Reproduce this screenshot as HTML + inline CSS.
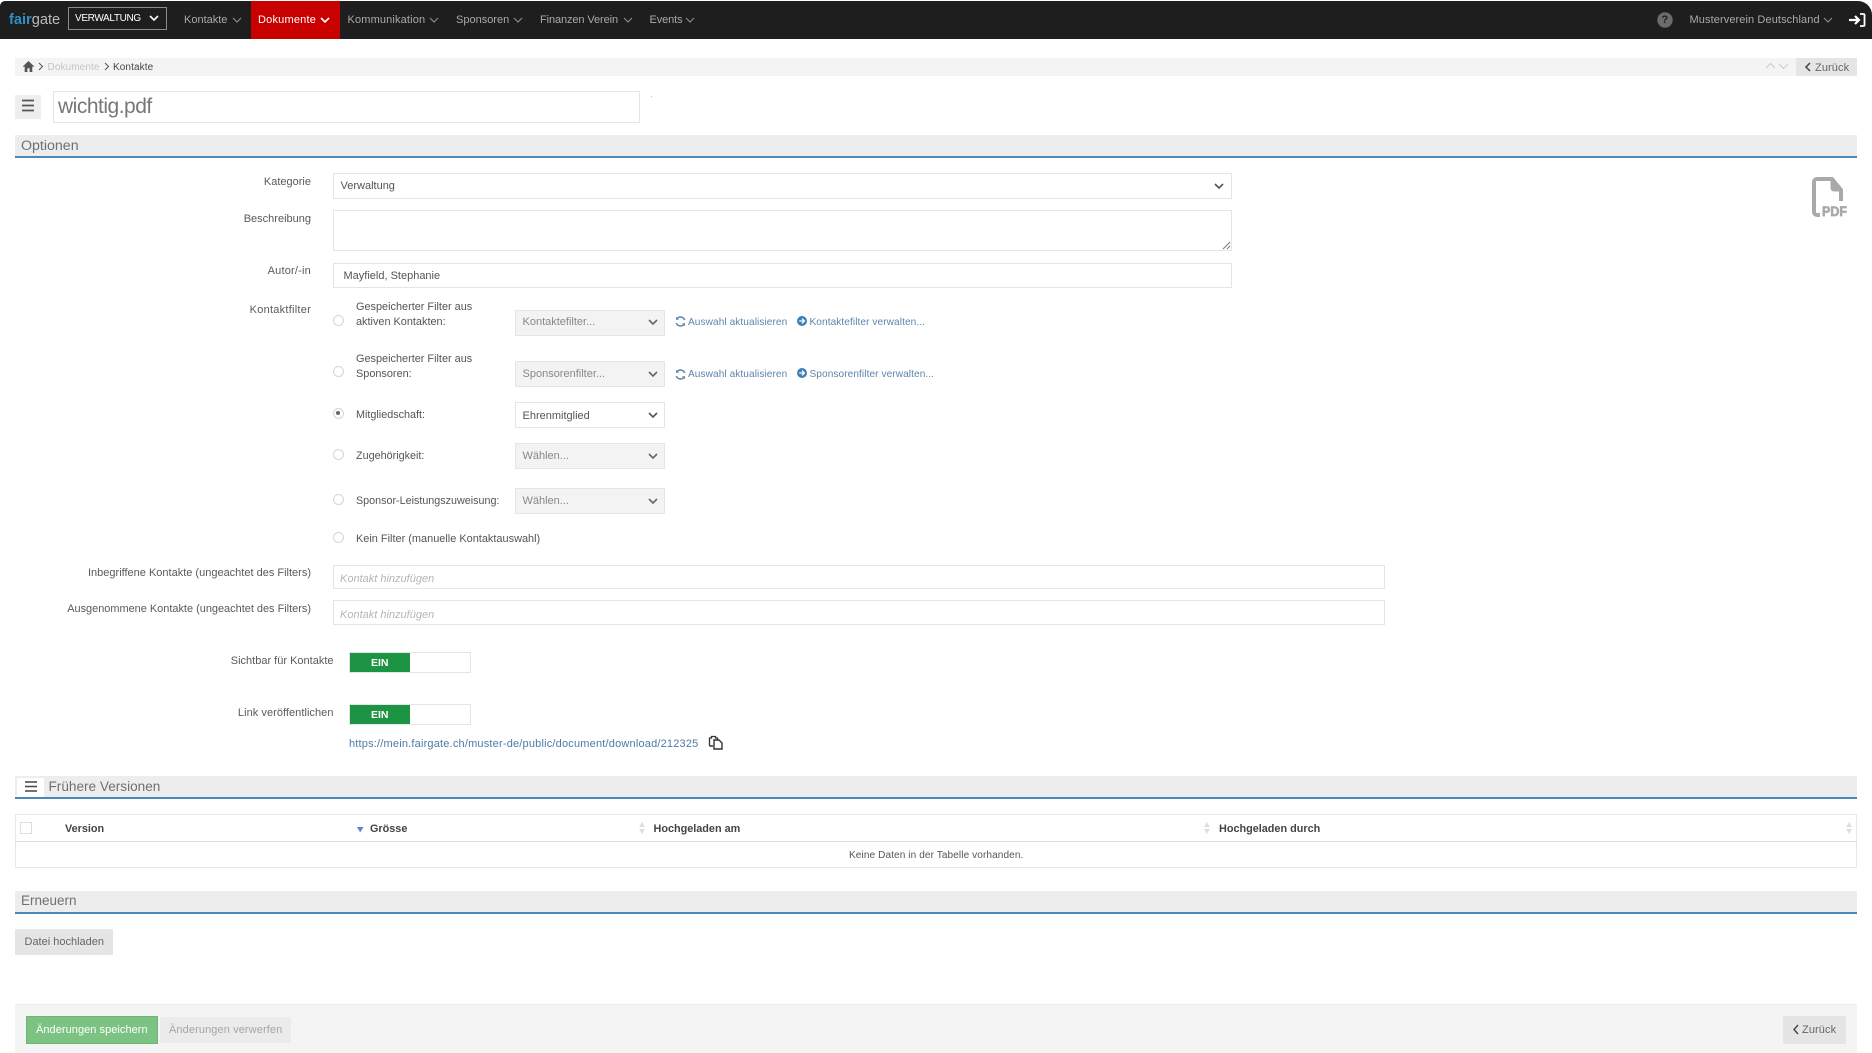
<!DOCTYPE html>
<html lang="de"><head><meta charset="utf-8"><title>wichtig.pdf</title>
<style>
html,body{margin:0;padding:0;background:#fff}
body{position:relative;width:1872px;height:1053px;overflow:hidden;font-family:"Liberation Sans",sans-serif;font-size:11px;color:#555}
.b,.t,svg{position:absolute;display:block}
.b{box-sizing:border-box}
.t{white-space:nowrap;line-height:14px}
.l{right:1561px;text-align:right;color:#5a5a5a}
.nav{color:#aaa;font-size:11px;letter-spacing:.1px;top:13px}
.in{left:333px;width:899px;border:1px solid #e5e5e5;background:#fff}
.sel{left:515px;width:150px;height:26px;border:1px solid #e5e5e5;background:#f3f3f3}
.band{left:15px;width:1842px;height:23px;background:#ededed;border-bottom:2px solid #4c87b9}
.h{font-size:13.6px;color:#707070;line-height:18px}
.r{left:332.5px;width:11px;height:11px;border:1px solid #d5d5d5;border-radius:50%;background:#fff}
.lnk{color:#5b86ac;font-size:10.1px;letter-spacing:.08px}
.th{color:#444;font-weight:bold;font-size:10.85px;top:821.5px}
.ch{fill:none;stroke:#888;stroke-width:1.2}
.cd{fill:none;stroke:#555;stroke-width:1.6}
.ph{color:#b5b5b5;font-style:italic;left:340px}
</style></head><body>

<!-- top bar -->
<div class="b" style="left:0;top:1px;width:1872px;height:38px;background:#1e1e1e;border-radius:5px 14px 0 0"></div>
<div class="t" style="left:9px;top:12px;font-size:14.6px;line-height:16px;color:#bbb"><b style="color:#2f8fc4">fair</b>gate</div>
<div class="b" style="left:68px;top:7px;width:99px;height:23px;border:1px solid #8a8a8a"></div>
<div class="t" style="left:75px;top:12px;color:#fff;font-size:10px;letter-spacing:-.35px">VERWALTUNG</div>
<svg style="left:149px;top:15px" width="10" height="7"><path d="M1 1l4 4 4-4" fill="none" stroke="#fff" stroke-width="1.6"/></svg>

<div class="t nav" style="left:184px;letter-spacing:0">Kontakte</div>
<svg style="left:232px;top:17px" width="10" height="6"><path class="ch" d="M1 1l4 4 4-4"/></svg>
<div class="b" style="left:251px;top:1px;width:89px;height:38px;background:#c80000"></div>
<div class="t nav" style="left:258px;color:#fff;letter-spacing:.2px">Dokumente</div>
<svg style="left:320px;top:17px" width="10" height="6"><path d="M1 1l4 4 4-4" fill="none" stroke="#fff" stroke-width="1.6"/></svg>
<div class="t nav" style="left:347.5px;letter-spacing:.15px">Kommunikation</div>
<svg style="left:429px;top:17px" width="10" height="6"><path class="ch" d="M1 1l4 4 4-4"/></svg>
<div class="t nav" style="left:456px;letter-spacing:0">Sponsoren</div>
<svg style="left:513px;top:17px" width="10" height="6"><path class="ch" d="M1 1l4 4 4-4"/></svg>
<div class="t nav" style="left:540px;letter-spacing:-.1px">Finanzen Verein</div>
<svg style="left:623px;top:17px" width="10" height="6"><path class="ch" d="M1 1l4 4 4-4"/></svg>
<div class="t nav" style="left:649.5px;letter-spacing:-.1px">Events</div>
<svg style="left:685px;top:17px" width="10" height="6"><path class="ch" d="M1 1l4 4 4-4"/></svg>

<svg style="left:1657px;top:12px" width="16" height="16"><circle cx="8" cy="8" r="7.7" fill="#6b6b6b"/></svg>
<div class="t" style="left:1661.5px;top:13px;color:#1e1e1e;font-weight:bold;font-size:11px">?</div>
<div class="t" style="left:1689.5px;top:13px;color:#aaa;font-size:11px;letter-spacing:.1px">Musterverein Deutschland</div>
<svg style="left:1823px;top:17px" width="10" height="6"><path class="ch" d="M1 1l4 4 4-4"/></svg>
<svg style="left:1848px;top:12px" width="18" height="16"><path d="M1 8h9M7 4l4 4-4 4" fill="none" stroke="#fff" stroke-width="2.2"/><path d="M12 2h3.5a1 1 0 0 1 1 1v10a1 1 0 0 1-1 1H12" fill="none" stroke="#fff" stroke-width="1.8"/></svg>

<!-- breadcrumb -->
<div class="b" style="left:15px;top:58px;width:1842px;height:18px;background:#f4f4f4"></div>
<svg style="left:23px;top:61px" width="11" height="11"><path d="M5.5 0L0 5.3l.8.8.9-.8V11h2.7V7.3h2.2V11h2.7V5.3l.9.8.8-.8z" fill="#555"/></svg>
<svg style="left:38px;top:62px" width="6" height="9"><path d="M1 1l3.5 3.5L1 8" fill="none" stroke="#555" stroke-width="1"/></svg>
<div class="t" style="left:47.5px;top:60.5px;color:#c4c4c4;font-size:10px;letter-spacing:.1px">Dokumente</div>
<svg style="left:104px;top:62px" width="6" height="9"><path d="M1 1l3.5 3.5L1 8" fill="none" stroke="#555" stroke-width="1"/></svg>
<div class="t" style="left:113px;top:60.5px;color:#444;font-size:10px;letter-spacing:.1px">Kontakte</div>
<svg style="left:1765px;top:62px" width="11" height="7"><path d="M1 6l4.5-4.5L10 6" fill="none" stroke="#ccc" stroke-width="1.1"/></svg>
<svg style="left:1778px;top:63px" width="11" height="7"><path d="M1 1l4.5 4.5L10 1" fill="none" stroke="#ccc" stroke-width="1.1"/></svg>
<div class="b" style="left:1796px;top:58px;width:61px;height:18px;background:#e5e5e5"></div>
<svg style="left:1803.5px;top:62px" width="8" height="10"><path d="M6 1L2 5l4 4" fill="none" stroke="#444" stroke-width="1.5"/></svg>
<div class="t" style="left:1815px;top:60.5px;color:#666;font-size:11px;letter-spacing:.1px">Zurück</div>

<!-- title -->
<div class="b" style="left:15px;top:95px;width:26px;height:24px;background:#eee"></div>
<svg style="left:22px;top:99px" width="12" height="13"><path d="M0 1.5h12M0 6.5h12M0 11.5h12" stroke="#555" stroke-width="1.7"/></svg>
<div class="b" style="left:53px;top:91px;width:587px;height:32px;border:1px solid #e5e5e5"></div>
<div class="t" style="left:58px;top:94px;font-size:21px;line-height:26px;color:#777;letter-spacing:-.5px">wichtig.pdf</div>
<div class="b" style="left:651px;top:95.5px;width:1px;height:1px;background:#bbb"></div>

<!-- Optionen -->
<div class="b band" style="top:135px"></div>
<div class="t h" style="left:21px;top:136.5px;font-size:14.2px">Optionen</div>

<div class="t l" style="top:175px">Kategorie</div>
<div class="b in" style="top:173px;height:26px"></div>
<div class="t" style="left:340.5px;top:179px">Verwaltung</div>
<svg style="left:1214px;top:183px" width="10" height="7"><path class="cd" d="M1 1l4 4 4-4"/></svg>

<div class="t l" style="top:212px">Beschreibung</div>
<div class="b in" style="top:210px;height:41px"></div>
<svg style="left:1222px;top:241px" width="9" height="9"><path d="M8 1L1 8M8 5L5 8" stroke="#777" stroke-width="1"/></svg>

<div class="t l" style="top:264px;letter-spacing:.2px">Autor/-in</div>
<div class="b in" style="top:263px;height:25px"></div>
<div class="t" style="left:343.5px;top:268.5px">Mayfield, Stephanie</div>

<div class="t l" style="top:303px;letter-spacing:.25px">Kontaktfilter</div>

<div class="b r" style="top:315px"></div>
<div class="t" style="left:356px;top:299.5px;font-size:10.9px">Gespeicherter Filter aus</div>
<div class="t" style="left:356px;top:314.5px;font-size:10.9px">aktiven Kontakten:</div>
<div class="b sel" style="top:310px"></div>
<div class="t" style="left:522.5px;top:315px;color:#888">Kontaktefilter...</div>
<svg style="left:648px;top:319px" width="10" height="7"><path class="cd" style="stroke:#666" d="M1 1l4 4 4-4"/></svg>
<svg style="left:675px;top:316px" width="11" height="11"><path d="M9.7 4A4.4 4.4 0 0 0 1.9 3M1.3 7a4.4 4.4 0 0 0 7.8 1" fill="none" stroke="#5b86ac" stroke-width="1.5"/><path d="M1 .8v3h3zM10 10.2v-3H7z" fill="#5b86ac"/></svg>
<div class="t lnk" style="left:688px;top:316px">Auswahl aktualisieren</div>
<svg style="left:797px;top:316px" width="10" height="10"><circle cx="5" cy="5" r="5" fill="#3d7fb5"/><path d="M2.2 5h5M5 2.6L7.4 5 5 7.4" fill="none" stroke="#fff" stroke-width="1.3"/></svg>
<div class="t lnk" style="left:809.5px;top:316px">Kontaktefilter verwalten...</div>

<div class="b r" style="top:366px"></div>
<div class="t" style="left:356px;top:351.5px;font-size:10.9px">Gespeicherter Filter aus</div>
<div class="t" style="left:356px;top:366.5px;font-size:10.9px">Sponsoren:</div>
<div class="b sel" style="top:361px"></div>
<div class="t" style="left:522.5px;top:367px;color:#888">Sponsorenfilter...</div>
<svg style="left:648px;top:371px" width="10" height="7"><path class="cd" style="stroke:#666" d="M1 1l4 4 4-4"/></svg>
<svg style="left:675px;top:368.5px" width="11" height="11"><path d="M9.7 4A4.4 4.4 0 0 0 1.9 3M1.3 7a4.4 4.4 0 0 0 7.8 1" fill="none" stroke="#5b86ac" stroke-width="1.5"/><path d="M1 .8v3h3zM10 10.2v-3H7z" fill="#5b86ac"/></svg>
<div class="t lnk" style="left:688px;top:368px">Auswahl aktualisieren</div>
<svg style="left:797px;top:368px" width="10" height="10"><circle cx="5" cy="5" r="5" fill="#3d7fb5"/><path d="M2.2 5h5M5 2.6L7.4 5 5 7.4" fill="none" stroke="#fff" stroke-width="1.3"/></svg>
<div class="t lnk" style="left:809.5px;top:368px">Sponsorenfilter verwalten...</div>

<div class="b r" style="top:407.5px"></div>
<div class="b" style="left:336px;top:411px;width:4px;height:4px;border-radius:50%;background:#666"></div>
<div class="t" style="left:356px;top:407.5px;font-size:10.8px">Mitgliedschaft:</div>
<div class="b sel" style="top:402px;height:25.5px;background:#fff"></div>
<div class="t" style="left:522.5px;top:408.5px">Ehrenmitglied</div>
<svg style="left:648px;top:412px" width="10" height="7"><path class="cd" d="M1 1l4 4 4-4"/></svg>

<div class="b r" style="top:449px"></div>
<div class="t" style="left:356px;top:448.5px;font-size:10.8px">Zugehörigkeit:</div>
<div class="b sel" style="top:443px"></div>
<div class="t" style="left:522.5px;top:449px;color:#888">Wählen...</div>
<svg style="left:648px;top:453px" width="10" height="7"><path class="cd" style="stroke:#666" d="M1 1l4 4 4-4"/></svg>

<div class="b r" style="top:494px"></div>
<div class="t" style="left:356px;top:494px;font-size:10.75px">Sponsor-Leistungszuweisung:</div>
<div class="b sel" style="top:488px"></div>
<div class="t" style="left:522.5px;top:494px;color:#888">Wählen...</div>
<svg style="left:648px;top:498px" width="10" height="7"><path class="cd" style="stroke:#666" d="M1 1l4 4 4-4"/></svg>

<div class="b r" style="top:531.5px"></div>
<div class="t" style="left:356px;top:532px;font-size:10.95px">Kein Filter (manuelle Kontaktauswahl)</div>

<div class="t l" style="top:565.5px">Inbegriffene Kontakte (ungeachtet des Filters)</div>
<div class="b in" style="top:565px;height:24px;width:1052px"></div>
<div class="t ph" style="top:571.5px">Kontakt hinzufügen</div>
<div class="t l" style="top:601.5px;font-size:10.95px">Ausgenommene Kontakte (ungeachtet des Filters)</div>
<div class="b in" style="top:600px;height:25px;width:1052px"></div>
<div class="t ph" style="top:607.5px">Kontakt hinzufügen</div>

<!-- toggles -->
<div class="t" style="right:1538.5px;top:653.5px;color:#5a5a5a">Sichtbar für Kontakte</div>
<div class="b" style="left:349px;top:652px;width:122px;height:21px;border:1px solid #e5e5e5"></div>
<div class="b" style="left:350px;top:653px;width:60px;height:19px;background:#1c9443"></div>
<div class="t" style="left:371px;top:655.5px;color:#fff;font-weight:bold;font-size:10.5px">EIN</div>

<div class="t" style="right:1538.5px;top:706px;color:#5a5a5a;letter-spacing:.05px">Link veröffentlichen</div>
<div class="b" style="left:349px;top:704px;width:122px;height:21px;border:1px solid #e5e5e5"></div>
<div class="b" style="left:350px;top:705px;width:60px;height:19px;background:#1c9443"></div>
<div class="t" style="left:371px;top:707.5px;color:#fff;font-weight:bold;font-size:10.5px">EIN</div>

<div class="t" style="left:349px;top:737px;color:#4c7ba8;font-size:11px;letter-spacing:.19px">https://mein.fairgate.ch/muster-de/public/document/download/212325</div>
<svg style="left:708px;top:735px" width="16" height="15"><path d="M1.5 11V3h2V1.5h4V3h2v1.5" fill="none" stroke="#333" stroke-width="1.3"/><path d="M1.5 11H5M6 5h5l3 3v6H6z" fill="#fff" stroke="#333" stroke-width="1.4"/></svg>

<!-- Frühere Versionen -->
<div class="b band" style="top:776px"></div>
<div class="b" style="left:17px;top:778px;width:27px;height:19px;background:#fff"></div>
<svg style="left:24.5px;top:781px" width="12" height="11"><path d="M0 1h12M0 5.5h12M0 10h12" stroke="#444" stroke-width="1.6"/></svg>
<div class="t h" style="left:48.5px;top:777.5px">Frühere Versionen</div>

<div class="b" style="left:15px;top:814px;width:1842px;height:54px;border:1px solid #e8e8e8;border-top:1px solid #e8e8e8"></div>
<div class="b" style="left:15px;top:841px;width:1842px;height:1px;background:#dedede"></div>
<div class="b" style="left:19.5px;top:822px;width:12px;height:12px;border:1px solid #ddd"></div>
<div class="t th" style="left:65px">Version</div>
<svg style="left:357px;top:827px" width="7" height="6"><path d="M0 0h6.5L3.2 5.5z" fill="#6f7fc4"/></svg>
<div class="t th" style="left:370px">Grösse</div>
<svg style="left:639px;top:822px" width="6" height="12"><path d="M3 0l2.8 5H.2zM3 12L.2 7h5.6z" fill="#ddd"/></svg>
<div class="t th" style="left:653.5px">Hochgeladen am</div>
<svg style="left:1204px;top:822px" width="6" height="12"><path d="M3 0l2.8 5H.2zM3 12L.2 7h5.6z" fill="#ddd"/></svg>
<div class="t th" style="left:1219px">Hochgeladen durch</div>
<svg style="left:1846px;top:822px" width="6" height="12"><path d="M3 0l2.8 5H.2zM3 12L.2 7h5.6z" fill="#ddd"/></svg>
<div class="t" style="left:849px;top:848.5px;color:#555;font-size:10.05px;letter-spacing:.1px">Keine Daten in der Tabelle vorhanden.</div>

<!-- Erneuern -->
<div class="b band" style="top:891px"></div>
<div class="t h" style="left:21px;top:892px;font-size:13.5px">Erneuern</div>
<div class="b" style="left:15px;top:929px;width:98px;height:26px;background:#e5e5e5"></div>
<div class="t" style="left:24.5px;top:934.5px;color:#666;font-size:11px">Datei hochladen</div>

<!-- footer -->
<div class="b" style="left:15px;top:1004px;width:1842px;height:49px;background:#f4f4f4;border-top:1px solid #e9e9e9"></div>
<div class="b" style="left:26px;top:1016px;width:132px;height:28px;background:#7cc383;border:1px solid #6bb873"></div>
<div class="t" style="left:36px;top:1023px;color:#fff;font-size:11px;letter-spacing:.05px">Änderungen speichern</div>
<div class="b" style="left:160px;top:1017px;width:131px;height:26px;background:#ebebeb"></div>
<div class="t" style="left:169px;top:1023px;color:#a5a5a5;font-size:11px;letter-spacing:.1px">Änderungen verwerfen</div>
<div class="b" style="left:1783px;top:1016px;width:63px;height:28px;background:#e5e5e5"></div>
<svg style="left:1792px;top:1024px" width="8" height="11"><path d="M6 1L2 5.5 6 10" fill="none" stroke="#444" stroke-width="1.4"/></svg>
<div class="t" style="left:1802px;top:1023px;color:#666;font-size:11px;letter-spacing:.1px">Zurück</div>

<!-- pdf icon -->
<svg style="left:1811px;top:177px" width="38" height="42"><path d="M9 38H6a3 3 0 0 1-3-3V5a3 3 0 0 1 3-3h15l9 11v11" fill="none" stroke="#a9a9a9" stroke-width="4"/><path d="M21 2v9a2 2 0 0 0 2 2h7" fill="#a9a9a9" stroke="#a9a9a9" stroke-width="3"/><text x="11" y="39" font-family="Liberation Sans,sans-serif" font-weight="bold" font-size="14" fill="#a9a9a9" stroke="#a9a9a9" stroke-width=".7" textLength="25" lengthAdjust="spacingAndGlyphs">PDF</text></svg>
</body></html>
